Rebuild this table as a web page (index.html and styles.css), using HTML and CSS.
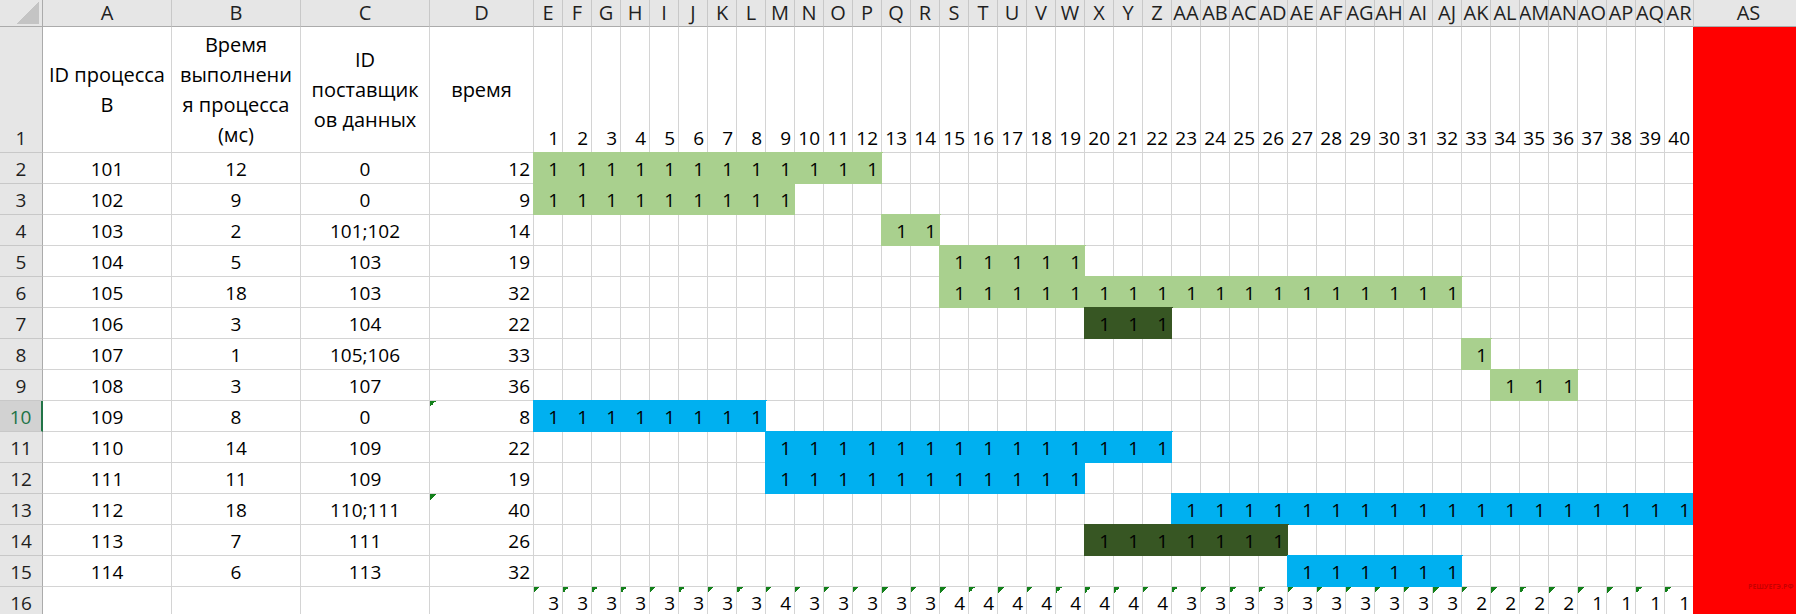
FILE: index.html
```html
<!DOCTYPE html>
<html lang="ru">

<head>
    <meta charset="UTF-8">
    <meta name="viewport" content="width=device-width, initial-scale=1.0">
    <title>Процессы</title>
    <link rel="stylesheet" href="styles.css">
</head>

<body>
    <div class="sheet" id="sheet"></div>
    <div class="watermark">РЕШУЕГЭ.РФ</div>

    <script>
        const sheet = document.getElementById('sheet');

        // id, duration, suppliers, finish time, fill
        const procs = [
            [101, 12, '0', 12, 'light'],
            [102, 9, '0', 9, 'light'],
            [103, 2, '101;102', 14, 'light'],
            [104, 5, '103', 19, 'light'],
            [105, 18, '103', 32, 'light'],
            [106, 3, '104', 22, 'dark'],
            [107, 1, '105;106', 33, 'light'],
            [108, 3, '107', 36, 'light'],
            [109, 8, '0', 8, 'blue'],
            [110, 14, '109', 22, 'blue'],
            [111, 11, '109', 19, 'blue'],
            [112, 18, '110;111', 40, 'blue'],
            [113, 7, '111', 26, 'dark'],
            [114, 6, '113', 32, 'blue']
        ];
        const flagged = [109, 112];
        const steps = 40;

        function colName(n) {
            let s = '';
            n++;
            while (n > 0) {
                const m = (n - 1) % 26;
                s = String.fromCharCode(65 + m) + s;
                n = Math.floor((n - 1) / 26);
            }
            return s;
        }

        function add(html, cls) {
            const el = document.createElement('div');
            el.className = 'cell ' + (cls || '');
            el.innerHTML = html;
            sheet.appendChild(el);
        }

        // column letters
        add('', 'corner');
        for (let i = 0; i < 4 + steps + 1; i++) {
            add(colName(i), 'col-hd');
        }

        // row 1: titles and time steps
        add('1', 'row-hd');
        add('ID процесса<br>В', 'title');
        add('Время<br>выполнени<br>я процесса<br>(мс)', 'title');
        add('ID<br>поставщик<br>ов данных', 'title');
        add('время', 'title');
        for (let t = 1; t <= steps; t++) add(t, '');
        add('', 'red first');

        procs.forEach((p, i) => {
            const [id, dur, deps, end, fill] = p;
            const start = end - dur + 1;
            const row = i + 2;
            add(row, row === 10 ? 'row-hd sel' : 'row-hd');
            add(id, 'center');
            add(dur, 'center');
            add(deps, 'center');
            add(end, flagged.includes(id) ? 'tri' : '');
            for (let t = 1; t <= steps; t++) {
                if (t >= start && t <= end) add('1', fill);
                else add('', '');
            }
            add('', 'red');
        });

        // row 16: how many processes run at each step
        add('16', 'row-hd');
        for (let i = 0; i < 4; i++) add('', '');
        for (let t = 1; t <= steps; t++) {
            const n = procs.filter(p => t > p[3] - p[1] && t <= p[3]).length;
            add(n, 'tri');
        }
        add('', 'red');
    </script>
</body>

</html>
```

FILE: styles.css
```css
* {
    box-sizing: border-box;
}

body {
    margin: 0;
    overflow: hidden;
    background-color: #ffffff;
    font-family: "Open Sans", "Noto Sans", sans-serif;
    font-size: 19px;
    color: #000000;
}

.sheet {
    display: grid;
    grid-template-columns: 43px repeat(3, 129px) 104px repeat(40, 29px) 110px;
    grid-template-rows: 27px 126px repeat(15, 31px);
}

.cell {
    display: flex;
    align-items: flex-end;
    justify-content: flex-end;
    padding: 0 3px 2px 2px;
    line-height: 24px;
    white-space: nowrap;
    overflow: hidden;
    background-color: #ffffff;
    border-right: 1px solid #d4d4d4;
    border-bottom: 1px solid #d4d4d4;
}

.center {
    justify-content: center;
    padding-left: 0;
    padding-right: 0;
}

.title {
    align-items: center;
    justify-content: center;
    text-align: center;
    font-size: 20px;
    line-height: 30px;
    padding: 0;
}

/* headers */
.corner {
    background-color: #e6e6e6;
    background-image: linear-gradient(to bottom right, transparent 50%, #c4c4c4 50%);
    background-size: 22px 22px;
    background-repeat: no-repeat;
    background-position: right 3px bottom 2px;
    border-right: 1px solid #ababab;
    border-bottom: 1px solid #ababab;
}

.col-hd {
    background-color: #e6e6e6;
    align-items: center;
    justify-content: center;
    padding: 0;
    font-size: 20px;
    line-height: 26px;
    color: #1f1f1f;
    border-right: 1px solid #c8c8c8;
    border-bottom: 1px solid #ababab;
}

.row-hd {
    background-color: #e6e6e6;
    justify-content: center;
    padding-left: 0;
    padding-right: 0;
    color: #1f1f1f;
    border-right: 1px solid #ababab;
    border-bottom: 1px solid #c8c8c8;
}

.row-hd.sel {
    background-color: #d2d2d2;
    color: #217346;
    border-right: 2px solid #217346;
}

/* green corner mark */
.tri {
    background-image: linear-gradient(135deg, #12801a 50%, transparent 50%);
    background-size: 6px 6px;
    background-repeat: no-repeat;
    background-position: 0 0;
}

/* fills */
.light {
    background-color: #a9d08e;
    border-color: #a9d08e;
    box-shadow: 0 0 0 1px #a9d08e;
}

.dark {
    background-color: #375623;
    border-color: #375623;
    box-shadow: 0 0 0 1px #375623;
}

.blue {
    background-color: #00b0f0;
    border-color: #00b0f0;
    box-shadow: 0 0 0 1px #00b0f0;
}

.red {
    background-color: #ff0000;
    border-color: #ff0000;
    box-shadow: 0 0 0 1px #ff0000;
}

.red.first {
    box-shadow: -1px 0 0 0 #ff0000;
}

.watermark {
    position: absolute;
    top: 582px;
    left: 1748px;
    font-size: 7px;
    font-weight: bold;
    color: rgba(90, 0, 0, 0.35);
}
```
